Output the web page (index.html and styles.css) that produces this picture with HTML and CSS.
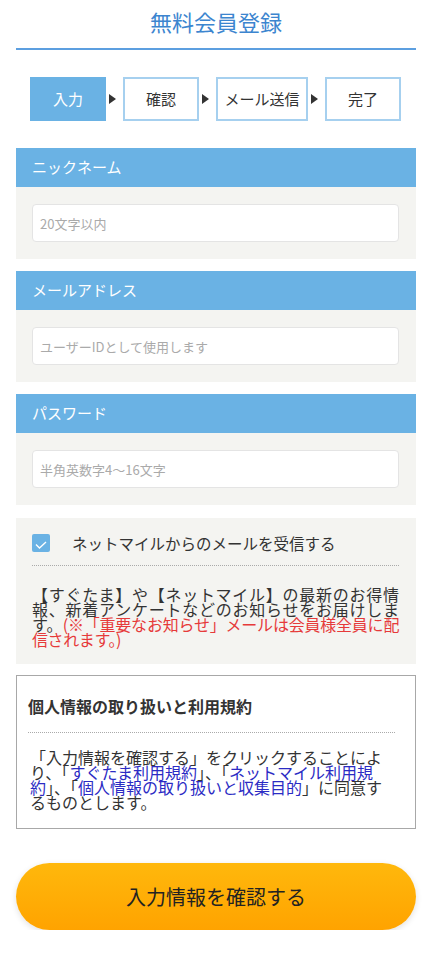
FILE: index.html
```html
<!DOCTYPE html>
<html lang="ja">
<head>
    <meta charset="UTF-8">
    <meta name="viewport" content="width=device-width, initial-scale=1.0">
    <title>無料会員登録</title>
    <link rel="stylesheet" href="styles.css">
</head>
<body>
    <div class="page">
        <h1 class="title">無料会員登録</h1>

        <div class="steps">
            <div class="step active">入力</div>
            <div class="step-arrow"></div>
            <div class="step">確認</div>
            <div class="step-arrow"></div>
            <div class="step wide">メール送信</div>
            <div class="step-arrow"></div>
            <div class="step">完了</div>
        </div>

        <div class="field">
            <div class="field-head">ニックネーム</div>
            <div class="field-body">
                <input type="text" placeholder="20文字以内">
            </div>
        </div>

        <div class="field">
            <div class="field-head">メールアドレス</div>
            <div class="field-body">
                <input type="email" placeholder="ユーザーIDとして使用します">
            </div>
        </div>

        <div class="field">
            <div class="field-head">パスワード</div>
            <div class="field-body">
                <input type="password" placeholder="半角英数字4〜16文字">
            </div>
        </div>

        <div class="mail-box">
            <label class="check-row">
                <span class="check">
                    <svg width="12" height="8" viewBox="0 0 12 8"><path d="M1 3.5 L4.5 7 L11 1" fill="none" stroke="#fff" stroke-width="1.4"/></svg>
                </span>
                <span>ネットマイルからのメールを受信する</span>
            </label>
            <p class="mail-note">【すぐたま】や【ネットマイル】の最新のお得情報、新着アンケートなどのお知らせをお届けします。<span class="red">(※「重要なお知らせ」メールは会員様全員に配信されます。)</span></p>
        </div>

        <div class="terms">
            <h2>個人情報の取り扱いと利用規約</h2>
            <p>「入力情報を確認する」をクリックすることにより、「<a href="#">すぐたま利用規約</a>」、「<a href="#">ネットマイル利用規約</a>」、「<a href="#">個人情報の取り扱いと収集目的</a>」に同意するものとします。</p>
        </div>

        <button class="submit">入力情報を確認する</button>
    </div>
</body>
</html>
```

FILE: styles.css
```css
body {
    margin: 0;
    background-color: #fff;
    font-family: "Noto Sans CJK JP", "Noto Sans", sans-serif;
    color: #333;
}
.page {
    width: 400px;
    margin-left: 16px;
}
.title {
    margin: 0;
    height: 48px;
    line-height: 42px;
    text-align: center;
    font-size: 22px;
    font-weight: normal;
    color: #3c85cf;
    border-bottom: 2px solid #5c9fe0;
}
.steps {
    display: flex;
    align-items: center;
    margin: 27px 0 27px 14px;
}
.step {
    width: 72px;
    height: 40px;
    border: 2px solid #a6d0ef;
    text-align: center;
    line-height: 40px;
    font-size: 15px;
    color: #333;
}
.step.wide {
    width: 88px;
}
.step.active {
    background-color: #6ab2e4;
    border-color: #6ab2e4;
    color: #fff;
}
.step-arrow {
    width: 17px;
    height: 10px;
    display: flex;
    justify-content: center;
}
.step-arrow::before {
    content: "";
    margin-left: -4px;
    border-left: 7px solid #333;
    border-top: 5px solid transparent;
    border-bottom: 5px solid transparent;
}
.field {
    margin-bottom: 12px;
}
.field-head {
    height: 39px;
    line-height: 38px;
    padding-left: 16px;
    background-color: #6ab2e4;
    color: #fff;
    font-size: 15px;
}
.field-body {
    background-color: #f4f4f1;
    padding: 17px 17px 17px 16px;
}
.field-body input {
    display: block;
    box-sizing: border-box;
    width: 100%;
    height: 38px;
    padding: 0 7px;
    border: 1px solid #e4e4e4;
    border-radius: 4px;
    background-color: #fff;
    font-family: inherit;
    font-size: 13px;
}
.field-body input::placeholder {
    color: #aaa;
}
.mail-box {
    margin-top: 13px;
    background-color: #f4f4f1;
    padding: 16px 17px 17px 16px;
}
.check-row {
    display: flex;
    align-items: center;
    height: 18px;
    padding-bottom: 13px;
    border-bottom: 1px dotted #aaa;
    font-size: 15.5px;
    color: #333;
}
.check {
    width: 18px;
    height: 18px;
    border-radius: 2px;
    background-color: #6ab2e4;
    display: flex;
    align-items: flex-end;
    justify-content: center;
    margin-right: 22px;
}
.check svg {
    margin-bottom: 3px;
}
.mail-note {
    margin: 21px 0 0;
    font-size: 16px;
    line-height: 15px;
    text-align: justify;
    color: #333;
}
.red {
    color: #e63a3a;
    letter-spacing: -0.4px;
}
.terms {
    margin-top: 11px;
    border: 1px solid #a8a8a8;
    padding: 0 20px 18px 11px;
}
.terms h2 {
    margin: 0;
    height: 56px;
    line-height: 60px;
    font-size: 16px;
    font-weight: bold;
    color: #333;
    border-bottom: 1px dotted #aaa;
}
.terms p {
    margin: 17px 0 0 2px;
    font-size: 16px;
    line-height: 15px;
    color: #333;
}
.terms a {
    color: #2b2bc4;
    text-decoration: none;
}
.submit {
    display: block;
    width: 400px;
    height: 67px;
    margin-top: 34px;
    border: none;
    border-radius: 34px;
    background: linear-gradient(#ffb80c, #ffa300);
    box-shadow: 0 2px 6px rgba(0, 0, 0, 0.12);
    font-family: inherit;
    font-size: 20px;
    color: #222;
    cursor: pointer;
}
```
